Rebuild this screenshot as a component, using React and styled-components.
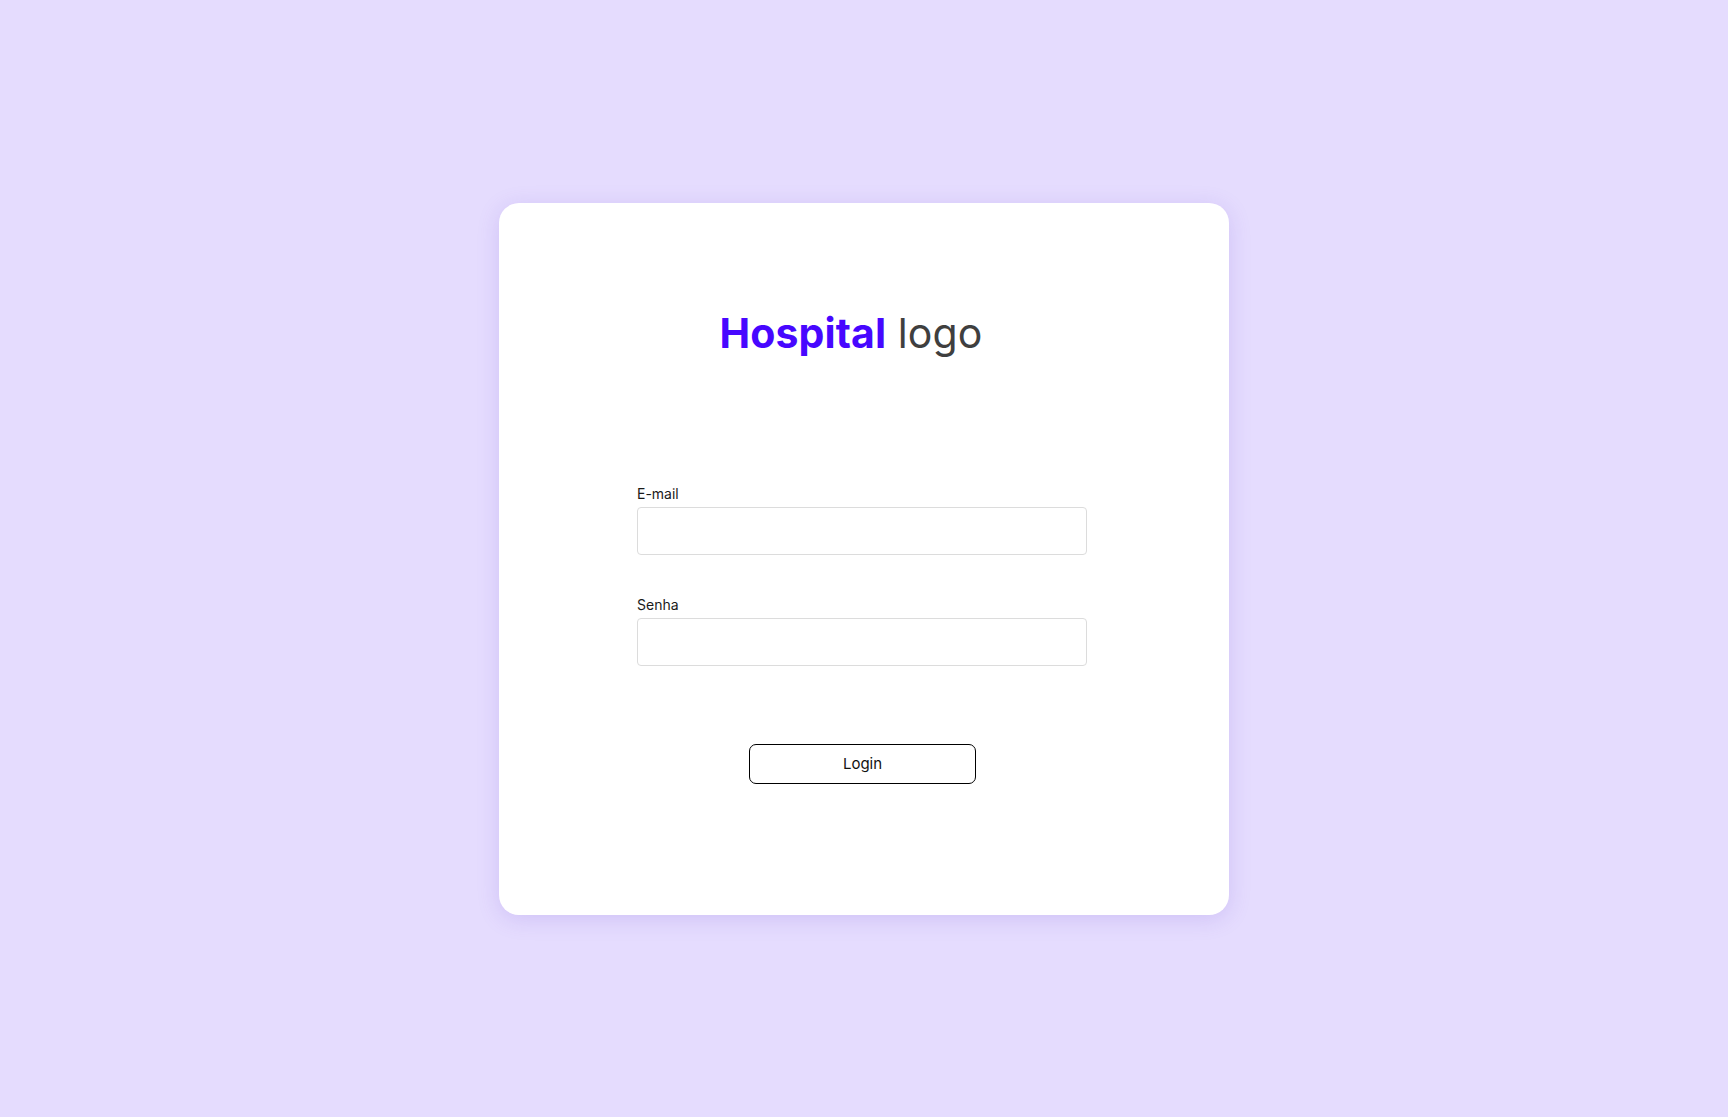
import React, {useState} from 'react'
import styled, {createGlobalStyle} from 'styled-components';

const GlobalStyle = createGlobalStyle`
    html, body {
        margin: 0;
        padding: 0;
        background: #E5DCFE;
        font-family: Inter, "Liberation Sans", sans-serif;
    }
`
const StyledPage = styled.div`
    width: 100vw;
    height: 100vh;
    display: flex;
    align-items: center;
    justify-content: center;
`
const StyledCard = styled.div`
    width: 730px;
    height: 712px;
    box-sizing: border-box;
    background: #ffffff;
    border-radius: 20px;
    box-shadow: 0 4px 22px rgba(110, 80, 210, 0.18);
    display: flex;
    flex-direction: column;
    align-items: center;
    padding-top: 106px;
`
const StyledLogo = styled.h1`
    margin: 0 26px 0 0;
    font-size: 41px;
    line-height: 48px;
    font-weight: 400;
    letter-spacing: 0.1px;
    color: #3f3f3f;
`
const StyledBrand = styled.span`
    font-weight: 700;
    color: #4707FF;
`
const StyledForm = styled.form`
    width: 450px;
    margin: 128px 4px 0 0;
    display: flex;
    flex-direction: column;
    gap: 41px;
`
const StyledField = styled.div`
    display: flex;
    flex-direction: column;
    gap: 5px;
`
const StyledLabel = styled.label`
    font-size: 14px;
    line-height: 17px;
    color: #1a1a1a;
`
const StyledInput = styled.input`
    height: 48px;
    box-sizing: border-box;
    border: 1px solid #dcdcdc;
    border-radius: 4px;
    padding: 0 12px;
    font-size: 15px;
    font-family: inherit;
    outline: none;
`
const StyledButton = styled.button`
    margin: 78px 3px 0 0;
    width: 227px;
    height: 40px;
    box-sizing: border-box;
    border: 1px solid #000;
    border-radius: 7px;
    background: #fff;
    font-family: inherit;
    font-size: 15px;
    color: #111;
    cursor: pointer;
`

const App = () => {

    const [email, setEmail] = useState('');
    const [senha, setSenha] = useState('');

    return(
        <StyledPage>
            <GlobalStyle />
            <StyledCard>
                <StyledLogo><StyledBrand>Hospital</StyledBrand> logo</StyledLogo>
                <StyledForm onSubmit={e => e.preventDefault()}>
                    <StyledField>
                        <StyledLabel htmlFor='email'>E-mail</StyledLabel>
                        <StyledInput id='email' type='email' value={email} onChange={e => setEmail(e.target.value)} />
                    </StyledField>
                    <StyledField>
                        <StyledLabel htmlFor='senha'>Senha</StyledLabel>
                        <StyledInput id='senha' type='password' value={senha} onChange={e => setSenha(e.target.value)} />
                    </StyledField>
                </StyledForm>
                <StyledButton type='button'>Login</StyledButton>
            </StyledCard>
        </StyledPage>
    );
}

export default App;
